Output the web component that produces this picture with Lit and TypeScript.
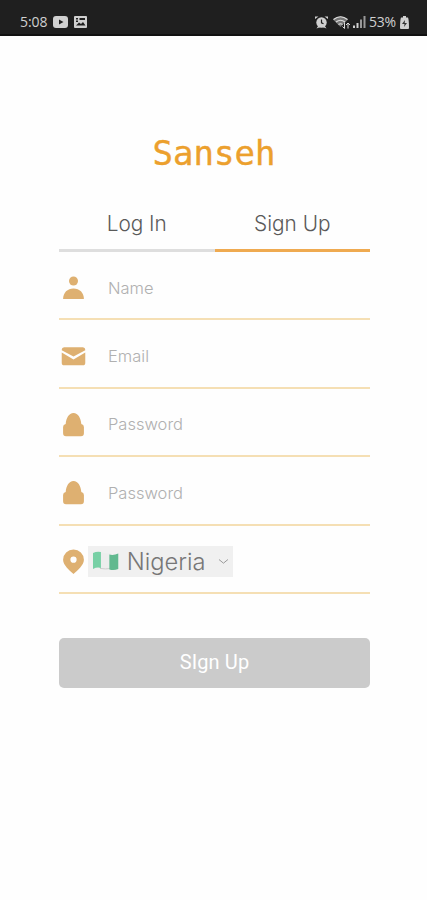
import { LitElement, html, css, svg } from "lit";
import { customElement } from "lit/decorators.js";

const person = svg`<circle cx="12" cy="5.800" r="4.300"/><path d="M2 23c0-6 4.200-10 10-10s10 4 10 10z"/>`;
const mail = svg`<path d="M.7 6V5.400Q.7 3 3 3h18Q23.300 3 23.300 5.400V6L12 12z"/><path d="M.7 8.200 12 14.900 23.300 8.200V18Q23.300 20.500 21 20.500H3Q.7 20.500 .7 18z"/>`;
const lock = svg`<path d="M4.500 11.500C5 6 7.500 1 12 1s7 5 7.500 10.500q2.500.5 2.500 3v6q0 2.800-2.800 2.800H4.800Q2 23.300 2 20.500v-6q0-2.500 2.500-3z"/>`;
const pin = svg`<path fill-rule="evenodd" d="M12 24C8 20 2 15.500 2 10.200a10 9.800 0 0 1 20 0C22 15.500 16 20 12 24zM12 7.300a3 3 0 1 0 0 6 3 3 0 0 0 0-6z"/>`;

@customElement("app-root")
export class AppRoot extends LitElement {
  static styles = css`
    :host { display: block; height: 900px; background: #fefefe; font-family: Inter, "Open Sans", sans-serif; font-weight: 300; overflow: hidden; }
    * { box-sizing: border-box; }
    .status { height: 36px; background: #1f1f1f; border-bottom: 2px solid #111; display: flex; align-items: center; padding: 10px 18px 0 20px; color: #d0d0d0; font: 400 14px/24px "Open Sans", sans-serif; }
    .status svg { display: block; fill: #d0d0d0; }
    .time { width: 29px; letter-spacing: -0.1px; white-space: nowrap; }
    .yt { margin-left: 4px; }
    .pic { margin-left: 6px; }
    .right { margin-left: auto; display: flex; align-items: center; }
    .wifi { margin-left: 5px; }
    .signal { margin-left: 3px; }
    .battery { margin-left: 2px; }
    .pct { margin-left: 3px; width: 29px; letter-spacing: -0.3px; white-space: nowrap; }
    .body { margin-left: 59px; width: 311px; }
    .logo { height: 52px; margin-top: 91px; text-align: center; color: #eca02d; font: 400 34px/52px "DejaVu Sans Mono", monospace; padding-right: 1px; -webkit-text-stroke: 0.4px #eca02d; }
    .tabs { display: flex; margin-top: 19px; }
    .tab { flex: 1; height: 54px; border-bottom: 3px solid #dedede; text-align: center; font-size: 20.800px; line-height: 51px; color: #5a5a5a; }
    .tab.on { border-color: #efaa50; }
    .row { height: 68.400px; border-bottom: 2px solid #f5dfb4; display: flex; align-items: center; padding: 5px 0 0 2px; color: #b0b0b0; font-size: 16.500px; }
    .row .ic { fill: #deb071; flex: none; }
    .label { margin-left: 22px; }
    .country { margin-left: 2px; width: 145px; height: 31px; background: #f0f0f0; display: flex; align-items: center; padding: 0 4px; font-size: 23.700px; color: #777; }
    .name { margin-left: 8px; width: 80px; white-space: nowrap; }
    .chev { margin-left: 12px; }
    .btn { display: block; margin-top: 44px; width: 311px; height: 50px; border: 0; border-radius: 5px; background: #cbcbcb; color: #fff; font: 400 20px/48px Roboto, sans-serif; letter-spacing: 0.1px; padding: 0 0 1px; }
  `;

  private field(icon: unknown, label: string) {
    return html`<div class="row"><svg class="ic" width="25" height="25" viewBox="0 0 24 24">${icon}</svg><span class="label">${label}</span></div>`;
  }

  render() {
    return html`
      <div class="status">
        <span class="time">5:08</span>
        <svg class="yt" width="15" height="12" viewBox="0 0 15 12"><rect width="15" height="12" rx="3"/><path d="M6 3.500 10.500 6 6 8.500z" fill="#1f1f1f"/></svg>
        <svg class="pic" width="13" height="12" viewBox="0 0 13 12"><rect width="13" height="12" rx="1"/><path d="M2 9.500 5 6.500l2 1.500 2-2 2.500 3.500zM2 2h2v1.500H2zM5.500 2H11v2H5.500zM2 4.500h2V6H2z" fill="#1f1f1f"/></svg>
        <div class="right">
          <svg width="13" height="13" viewBox="0 0 13 13"><circle cx="6.500" cy="6.500" r="5.200"/><path d="M0 3V.5h3.500zM13 3V.5H9.500zM1.500 12.500l2-3 2 1.500zM11.500 12.500l-2-3-2 1.500z"/><path d="M6.500 3.500v3.300l2 1" fill="none" stroke="#1f1f1f" stroke-width="1.200"/></svg>
          <svg class="wifi" width="17" height="13" viewBox="0 0 17 13"><path d="M0 3.500Q7.500-3 15 3.500L7.500 11z" fill="#777"/><path d="M.5 3.500q7-5.500 14 0M3 6q4.500-3.500 9 0M5.500 8.500q2-1.500 4 0" fill="none" stroke="#ddd" stroke-width="1.200"/><path d="M11.500 6.500v6M9.500 10.500l2 2M15 7v5.500M13 9l2-2 2 2" fill="none" stroke="#ddd"/></svg>
          <svg class="signal" width="13" height="12" viewBox="0 0 13 12"><path d="M0 9.500h2V12H0zM3.500 7h2v5h-2z"/><path d="M7 3.500h2V12H7zM10.500 0h2v12h-2z" fill="#999"/></svg>
          <span class="pct">53%</span>
          <svg class="battery" width="9" height="13" viewBox="0 0 9 13"><path d="M3 0h3v1.500h2Q9 4 9 12q0 1-1 1H1q-1 0-1-1Q0 4 1 1.500h2z"/><path d="M5 4 2 8h2.500L4 11l3-4H4.700z" fill="#333"/></svg>
        </div>
      </div>
      <div class="body">
        <div class="logo">Sanseh</div>
        <div class="tabs"><div class="tab">Log In</div><div class="tab on">Sign Up</div></div>
        ${this.field(person, "Name")}
        ${this.field(mail, "Email")}
        ${this.field(lock, "Password")}
        ${this.field(lock, "Password")}
        <div class="row">
          <svg class="ic" width="25" height="25" viewBox="0 0 24 24">${pin}</svg>
          <div class="country">
            <svg width="27" height="20" viewBox="0 0 27 20"><path d="M8 1q6 2 11 1v15q-5 1.500-11 0z" fill="#ededed"/><path d="M8 17.500q6 1 11 0" fill="none" stroke="#ccc"/><path d="M1 2Q5 0 9 1v16q-4-1-8 1z" fill="#77d0a5"/><path d="M17.500 3.500q4.500 1 9-1v15.500q-4.500 2-9 .5z" fill="#61b98f"/></svg>
            <span class="name">Nigeria</span>
            <svg class="chev" width="11" height="7" viewBox="0 0 11 7"><path d="M1 1.500 5.500 5.200 10 1.500" fill="none" stroke="#999"/></svg>
          </div>
        </div>
        <button class="btn">SIgn Up</button>
      </div>
    `;
  }
}
